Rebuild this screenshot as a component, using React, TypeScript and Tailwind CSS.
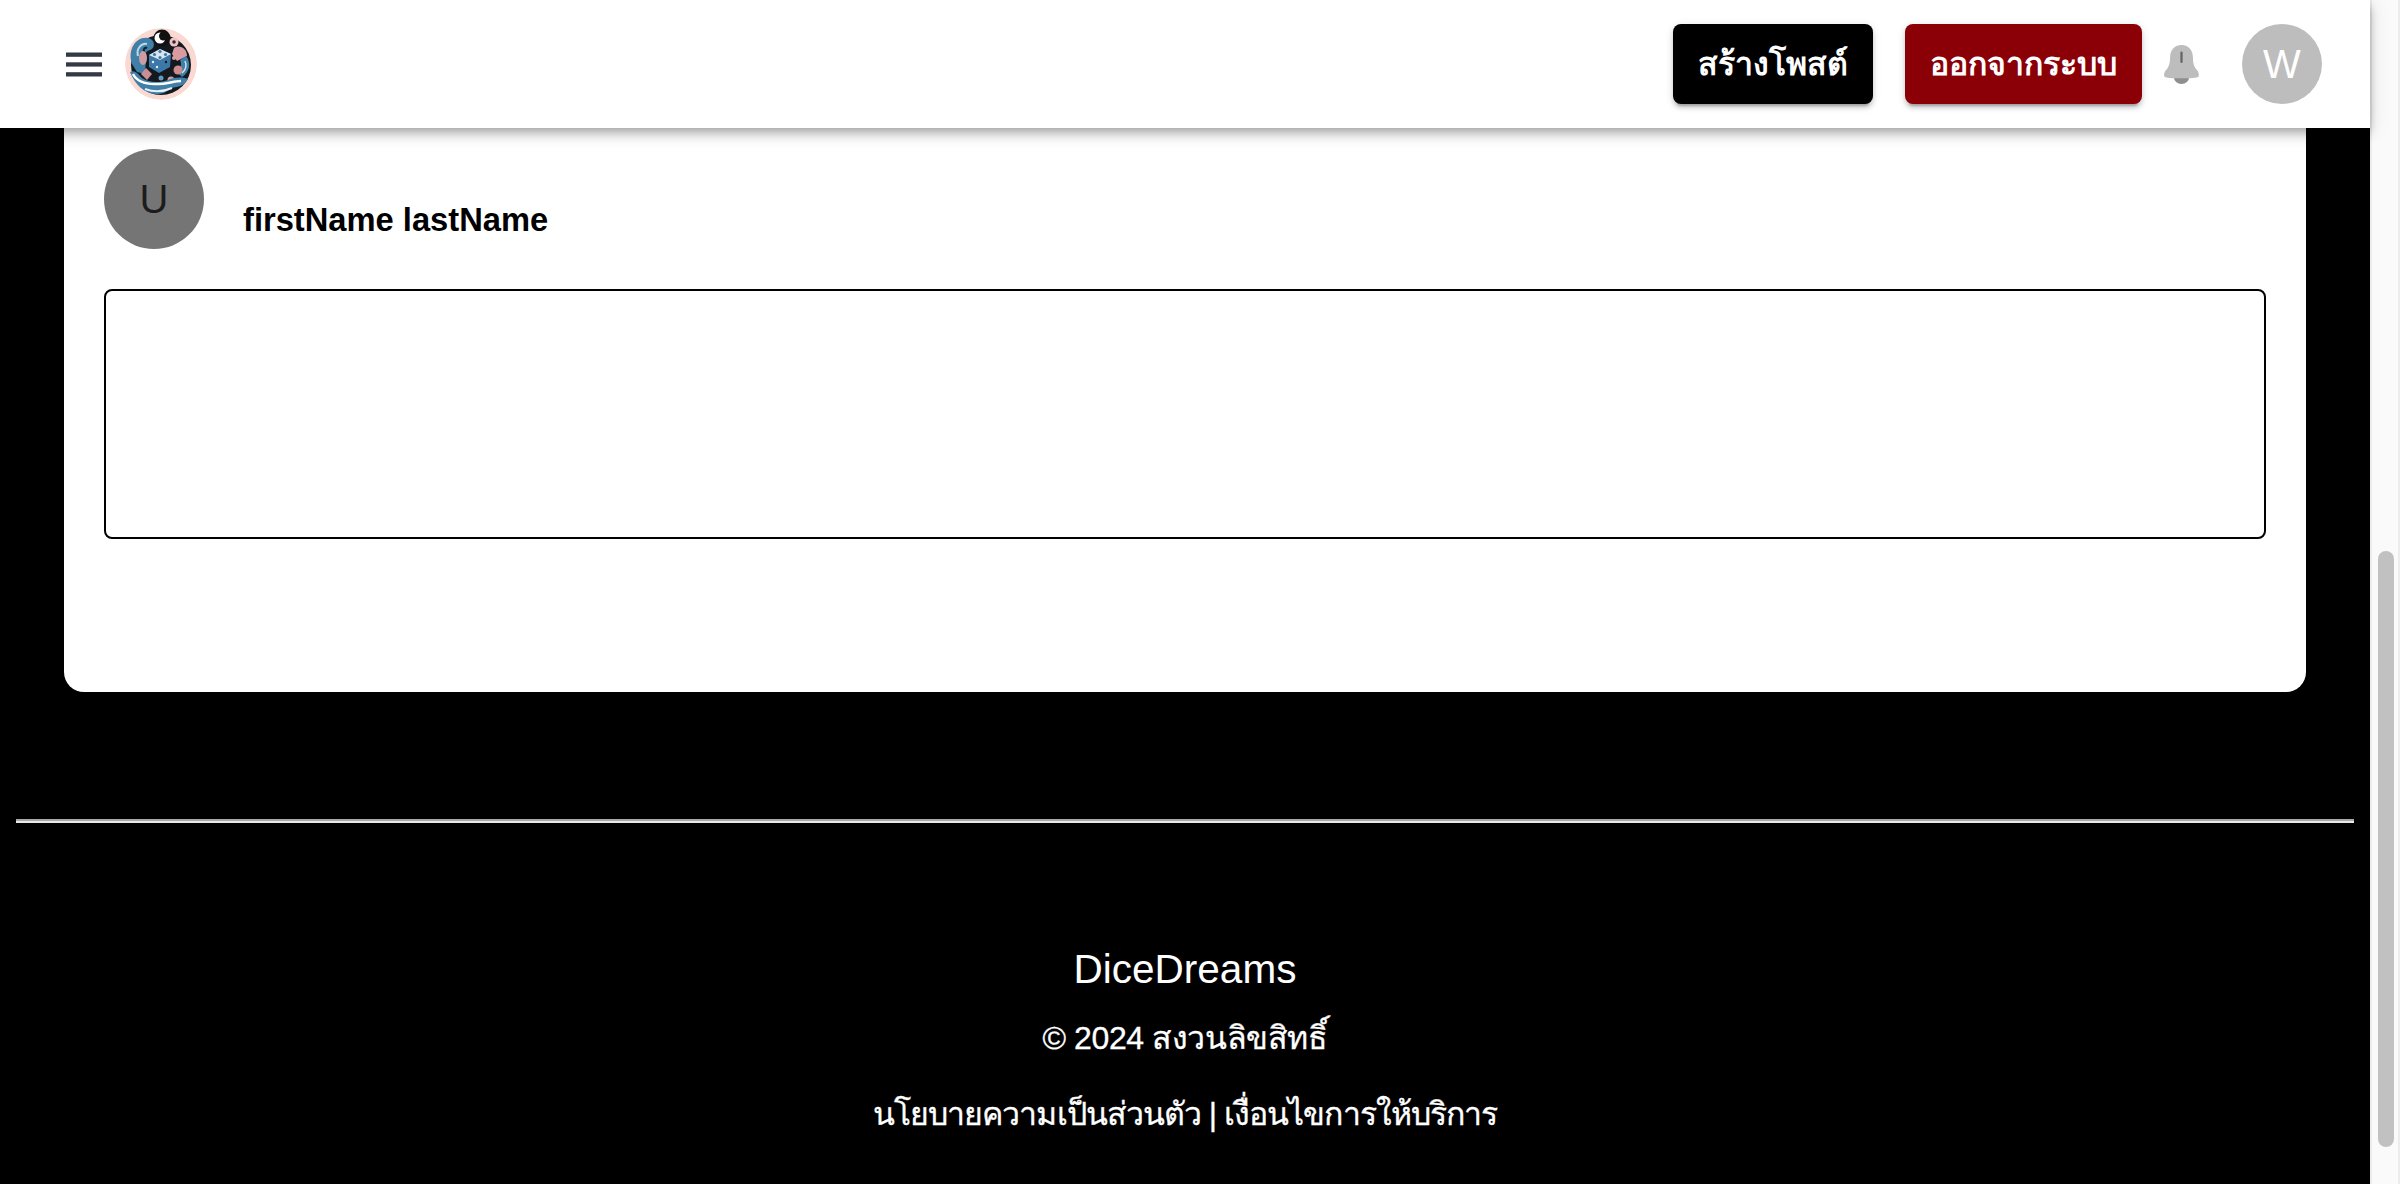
const sans = "font-['Liberation_Sans','Noto_Sans',sans-serif]";

function MenuIcon() {
  return (
    <button className="flex h-[48px] w-[48px] items-center justify-center">
      <svg width="36" height="25" viewBox="0 0 36 25" fill="#333a45">
        <rect x="0" y="0.5" width="36" height="4.3" />
        <rect x="0" y="10.3" width="36" height="4.3" />
        <rect x="0" y="20.2" width="36" height="4.3" />
      </svg>
    </button>
  );
}

function Logo() {
  return (
    <svg width="72" height="72" viewBox="0 0 72 72" className="rounded-full">
      <circle cx="36" cy="36" r="36" fill="#fbd9d3" />
      <circle cx="36" cy="37" r="30" fill="#14181f" />
      {/* moon */}
      <circle cx="37" cy="10" r="8.5" fill="#111" />
      <circle cx="35" cy="10" r="5.5" fill="#fff" />
      <circle cx="38.5" cy="8" r="4.5" fill="#111" />
      {/* flower */}
      <circle cx="49" cy="14" r="4.5" fill="#f0c4c4" />
      <circle cx="49" cy="14" r="1.8" fill="#30262a" />
      {/* swirls */}
      <path d="M7 36C2 22 11 8 23 10c7 1 8 10 2 12-4 1-6 4-4 9l-1 15-8-2z" fill="#3f7fa8" />
      <path d="M13 28c-2-7 3-13 9-12" stroke="#bcd8e8" strokeWidth="2" fill="none" />
      <path d="M19 24c-1-3 1-5 3-4" stroke="#16202a" strokeWidth="2" fill="none" />
      <path d="M49 20c6-4 13 1 13 8l-10 5-5-7z" fill="#d99aa2" />
      <path d="M61 28c6 7 3 17-4 21l-5-5c4-4 5-8 3-12z" fill="#3f7fa8" />
      <path d="M60 33c2 4 1 9-3 12" stroke="#cfe2ee" strokeWidth="1.5" fill="none" />
      {/* gems */}
      <ellipse cx="18" cy="30" rx="4" ry="7" fill="#cf9ca3" />
      <circle cx="53" cy="42" r="4.5" fill="#cc8c8c" />
      <circle cx="46" cy="52" r="3.5" fill="#d8a0a0" />
      <circle cx="36" cy="50" r="2.5" fill="#5f9cc2" />
      <circle cx="49" cy="30" r="2" fill="#d8a0a0" />
      <path d="M21 40l6 6-5 6-6-6z" fill="#c98d94" />
      {/* dice */}
      <path d="M24 27l11-6 11 5-1 13-11 6-10-6z" fill="#3d79a8" />
      <path d="M24 27l11-6 11 5-11 6z" fill="#d7e6f0" />
      <circle cx="35" cy="23.5" r="1.6" fill="#3d79a8" />
      <circle cx="29.5" cy="26.5" r="1.6" fill="#3d79a8" />
      <circle cx="40.5" cy="26.5" r="1.6" fill="#3d79a8" />
      <circle cx="35" cy="29.5" r="1.6" fill="#3d79a8" />
      <circle cx="28" cy="34" r="1.2" fill="#e6f0f6" />
      <circle cx="32" cy="39" r="1.2" fill="#e6f0f6" />
      <circle cx="41" cy="34" r="1.2" fill="#14181f" />
      {/* waves */}
      <path d="M5 44c5-3 9 3 12 6 7 5 18 5 26 2 7-3 14-3 20-1-3 5-6 7-11 8-10 1-9 7-19 7-12 1-23-9-28-22z" fill="#3f7fa8" />
      <path d="M8 46c4 8 12 10 22 10 10 1 18-3 26-3" stroke="#fff" strokeWidth="2.5" fill="none" />
      <path d="M20 61c8 3 18 3 27-1" stroke="#e9f2f7" strokeWidth="2" fill="none" />
    </svg>
  );
}

function BellIcon() {
  return (
    <svg width="37" height="40" viewBox="0 0 38 42">
      <ellipse cx="19" cy="35" rx="8" ry="7" fill="#8f8f8f" />
      <path d="M19 1c8 0 12 6 12 13 0 6 1 9 3 12 2 2 4 5 3 8-1 1-3 2-18 2S2 35 1 34c-1-3 1-6 3-8 2-3 3-6 3-12C7 7 11 1 19 1z" fill="#bdbdbd" />
      <rect x="17.8" y="8" width="2.4" height="12" rx="1.2" fill="#666" />
    </svg>
  );
}

function Header() {
  return (
    <header className="relative z-10 flex h-[128px] shrink-0 items-center justify-between bg-white pl-[60px] pr-[48px] shadow-[0_4px_8px_-2px_rgba(0,0,0,0.2),0_8px_10px_0_rgba(0,0,0,0.14),0_2px_20px_0_rgba(0,0,0,0.12)]">
      <div className="flex items-center gap-[17px]">
        <MenuIcon />
        <Logo />
      </div>
      <div className="flex items-center">
        <button className={`${sans} flex h-[80px] w-[200px] items-center justify-center rounded-[8px] bg-black text-[32px] font-bold text-white shadow-[0_6px_2px_-4px_rgba(0,0,0,0.2),0_4px_4px_0_rgba(0,0,0,0.14),0_2px_10px_0_rgba(0,0,0,0.12)]`}>
          สร้างโพสต์
        </button>
        <button className={`${sans} ml-[32px] flex h-[80px] w-[237px] items-center justify-center rounded-[8px] bg-[#8b0007] text-[32px] font-bold text-white shadow-[0_6px_2px_-4px_rgba(0,0,0,0.2),0_4px_4px_0_rgba(0,0,0,0.14),0_2px_10px_0_rgba(0,0,0,0.12)]`}>
          ออกจากระบบ
        </button>
        <span className="ml-[21px] flex">
          <BellIcon />
        </span>
        <div className={`${sans} ml-[42px] flex h-[80px] w-[80px] items-center justify-center rounded-full bg-[#bdbdbd] text-[40px] text-white`}>
          W
        </div>
      </div>
    </header>
  );
}

function PostCard() {
  return (
    <section className="mx-[64px] flex h-[564px] flex-col rounded-b-[20px] bg-white px-[40px] pt-[21px]">
      <div className="flex">
        <div className={`${sans} flex h-[100px] w-[100px] items-center justify-center rounded-full bg-[#757575] text-[40px] text-[#1c1c1c]`}>
          U
        </div>
        <p className={`${sans} ml-[39px] mt-[52px] text-[32.7px] leading-[38px] font-bold text-black`}>firstName lastName</p>
      </div>
      <textarea className="mt-[40px] h-[250px] w-full resize-none rounded-[8px] border-2 border-black bg-white" />
    </section>
  );
}

function Footer() {
  return (
    <footer className={`${sans} text-center text-white`}>
      <div className="mx-[16px] mt-[127px] h-[4px] border-t-2 border-b-2 border-t-[#a8a8a8] border-b-[#e8e8e8]" />
      <h2 className="mt-[123px] text-[40.5px] leading-[46px]">DiceDreams</h2>
      <p className="mt-[24px] text-[32px] leading-[44px] tracking-[-0.4px] [-webkit-text-stroke:0.3px_white]">© 2024 สงวนลิขสิทธิ์</p>
      <p className="mt-[32px] text-[32px] leading-[44px] tracking-[-0.95px] [-webkit-text-stroke:0.3px_white]">นโยบายความเป็นส่วนตัว | เงื่อนไขการให้บริการ</p>
    </footer>
  );
}

function Scrollbar() {
  return (
    <div className="h-full w-[30px] shrink-0 border-x-2 border-[#ececec] bg-[#fafafa] pl-[6px] pt-[551px]">
      <div className="h-[596px] w-[16px] rounded-full bg-[#c1c1c1]" />
    </div>
  );
}

export default function App() {
  return (
    <div className="flex h-[1184px] w-[2400px] overflow-hidden bg-black">
      <div className="flex min-w-0 flex-1 flex-col">
        <Header />
        <PostCard />
        <Footer />
      </div>
      <Scrollbar />
    </div>
  );
}
